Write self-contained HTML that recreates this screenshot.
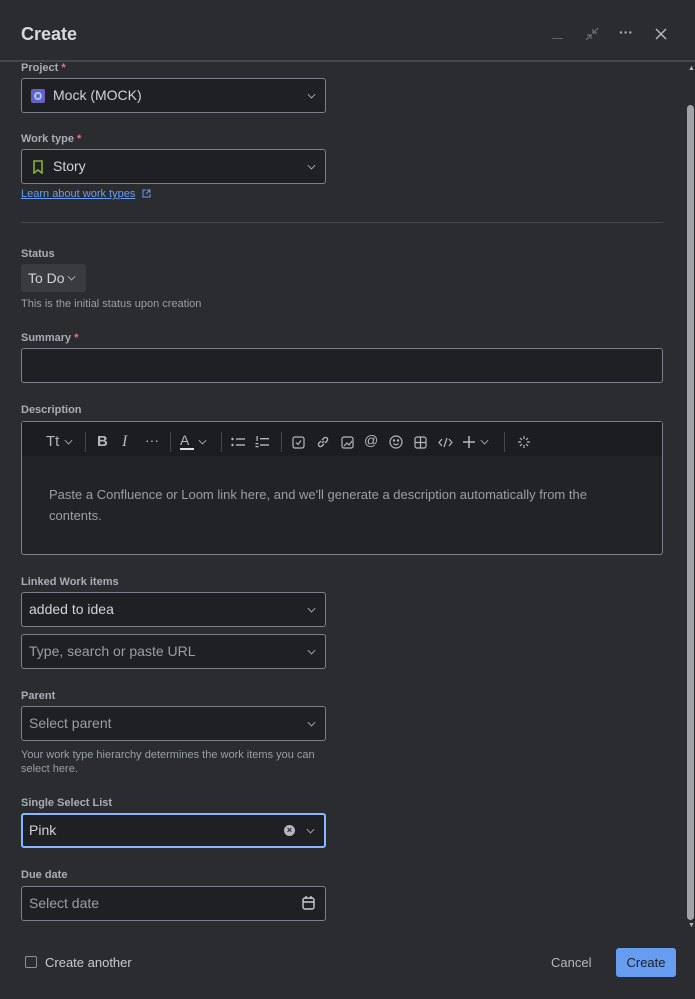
<!DOCTYPE html>
<html><head><style>
*{box-sizing:border-box;margin:0;padding:0}
body{width:695px;height:999px;background:#2b2c30;font-family:"Liberation Sans",sans-serif;color:#c7cad0;position:relative;overflow:hidden}
.a{position:absolute}
.lbl{position:absolute;left:21px;font-size:11px;font-weight:bold;color:#a9adb5}
.lbl b{color:#f87168}
.inp{position:absolute;left:21px;width:305px;height:35px;background:#1f2023;border:1px solid #7d8088;border-radius:3px;font-size:14px;color:#d0d3d9;padding-left:7px;line-height:33px}
.ph{color:#9a9ea6}
.chev{position:absolute;right:10px;top:12px;width:7px;height:7px;border-right:1.4px solid #b3b7bf;border-bottom:1.4px solid #b3b7bf;transform:rotate(45deg) scale(.8)}
.help{position:absolute;left:21px;font-size:11px;color:#9a9ea6;line-height:14px}
.tb{position:absolute;top:434px;font-size:14px;color:#b3b7bf}
.sep{position:absolute;top:432px;width:1px;height:20px;background:#45474c}
</style></head><body>
<div class="a" style="left:21px;top:24px;font-size:18px;font-weight:bold;color:#d6d9de">Create</div>
<div class="a" style="left:552px;top:38px;width:11px;height:1px;background:#5d6068"></div>
<svg class="a" style="left:585px;top:27px" width="14" height="14" viewBox="0 0 14 14" stroke="#6d7078" stroke-width="1.2" fill="none"><path d="M13 1L8 6M8 2v4h4M1 13l5-5M2 8h4v4"/></svg>
<div class="a" style="left:619px;top:24px;font-size:14px;color:#b3b7bf;font-weight:bold">···</div>
<svg class="a" style="left:655px;top:28px" width="12" height="12" stroke="#b3b7bf" stroke-width="1.5"><path d="M1 1L11 11M11 1L1 11"/></svg>
<div class="a" style="left:0;top:60px;width:695px;height:2px;background:#45474c"></div>
<div class="a" style="left:686px;top:62px;width:9px;height:937px;background:#2b2c30"></div>
<div class="a" style="left:688px;top:65px;font-size:7px;color:#b3b7bf">▲</div>
<div class="a" style="left:687px;top:105px;width:7px;height:815px;background:#a0a3a8;border-radius:4px"></div>
<div class="a" style="left:688px;top:922px;font-size:7px;color:#b3b7bf">▼</div>

<div class="lbl" style="top:62px">Project <b>*</b></div>
<div class="inp" style="top:78px;padding-left:31px">Mock (MOCK)<div class="chev"></div>
<div class="a" style="left:9px;top:10px;width:14px;height:14px;background:#6e5dc6;border-radius:2px"><div class="a" style="left:3px;top:3px;width:8px;height:8px;border:2px solid #8fd4f0;border-radius:50%"></div></div></div>

<div class="lbl" style="top:133px">Work type <b>*</b></div>
<div class="inp" style="top:149px;padding-left:31px">Story<div class="chev"></div>
<svg class="a" style="left:11px;top:10px" width="10" height="14"><path d="M1 1h8v12L5 10 1 13z" fill="none" stroke="#82b536" stroke-width="1.6"/></svg></div>
<div class="a" style="left:21px;top:188px;font-size:11px;color:#669df1;text-decoration:underline">Learn about work types</div>
<svg class="a" style="left:142px;top:189px" width="9" height="9" fill="none" stroke="#669df1" stroke-width="1"><path d="M4 1H1v7h7V5M5 1h3v3M8 1L4 5"/></svg>
<div class="a" style="left:21px;top:222px;width:642px;height:1px;background:#45474c"></div>

<div class="lbl" style="top:248px">Status</div>
<div class="a" style="left:21px;top:264px;width:65px;height:28px;background:#3a3b40;border-radius:3px;font-size:14px;color:#d0d3d9;padding:6px 0 0 7px">To Do<div class="chev" style="top:9px;right:11px"></div></div>
<div class="help" style="top:297px">This is the initial status upon creation</div>

<div class="lbl" style="top:332px">Summary <b>*</b></div>
<div class="inp" style="top:348px;width:642px"></div>

<div class="lbl" style="top:404px">Description</div>
<div class="a" style="left:21px;top:421px;width:642px;height:134px;border:1px solid #7d8088;border-radius:3px;background:#222326"></div>
<div class="a" style="left:22px;top:422px;width:640px;height:34px;background:#1c1d20"></div>
<div class="tb" style="left:46px;top:433px;font-size:15px">Tt</div><div class="chev" style="left:65px;top:437px;position:absolute"></div>
<div class="sep" style="left:85px"></div>
<div class="tb" style="left:97px;font-weight:bold;font-size:15px;top:433px">B</div>
<div class="tb" style="left:122px;font-style:italic;font-family:'Liberation Serif';font-size:16px;top:433px">I</div>
<div class="tb" style="left:145px;top:432px">···</div>
<div class="sep" style="left:170px"></div>
<div class="tb" style="left:180px;top:432px">A</div><div class="a" style="left:180px;top:448px;width:14px;height:2px;background:#e0e0e0"></div>
<div class="chev" style="left:199px;top:437px;position:absolute"></div>
<div class="sep" style="left:221px"></div>
<svg class="a" style="left:231px;top:436px" width="15" height="13" fill="#b3b7bf"><circle cx="1.5" cy="3" r="1.2"/><circle cx="1.5" cy="9" r="1.2"/><rect x="5" y="2.3" width="9" height="1.4"/><rect x="5" y="8.3" width="9" height="1.4"/></svg>
<svg class="a" style="left:255px;top:435px" width="15" height="14" fill="#b3b7bf"><rect x="1.5" y="1" width="1.3" height="5"/><rect x="0.5" y="8" width="3" height="1.3"/><rect x="0.5" y="11" width="3" height="1.3"/><rect x="5" y="3" width="9" height="1.4"/><rect x="5" y="9.3" width="9" height="1.4"/></svg>
<div class="sep" style="left:281px"></div>
<svg class="a" style="left:292px;top:436px" width="13" height="13" fill="none" stroke="#b3b7bf" stroke-width="1.2"><rect x="1" y="1" width="11" height="11" rx="2"/><path d="M4 6.5l2 2 3-4"/></svg>
<svg class="a" style="left:316px;top:435px" width="14" height="14" fill="none" stroke="#b3b7bf" stroke-width="1.3"><path d="M6 8l2-2M5 6L3 8a2 2 0 003 3l2-2M9 8l2-2a2 2 0 00-3-3L6 5"/></svg>
<svg class="a" style="left:341px;top:436px" width="13" height="13" fill="none" stroke="#b3b7bf" stroke-width="1.2"><rect x="1" y="1" width="11" height="11" rx="2"/><path d="M3 10l3-3 2 2 3-4"/></svg>
<div class="tb" style="left:364px;top:432px">@</div>
<svg class="a" style="left:389px;top:435px" width="14" height="14" fill="none" stroke="#b3b7bf" stroke-width="1.2"><circle cx="7" cy="7" r="6"/><path d="M4.5 8.5q2.5 2.5 5 0"/><circle cx="5" cy="5.5" r=".6" fill="#b3b7bf"/><circle cx="9" cy="5.5" r=".6" fill="#b3b7bf"/></svg>
<svg class="a" style="left:414px;top:436px" width="13" height="13" fill="none" stroke="#b3b7bf" stroke-width="1.2"><rect x="1" y="1" width="11" height="11" rx="2"/><path d="M6.5 1v11M1 6.5h11"/></svg>
<svg class="a" style="left:438px;top:436px" width="15" height="13" fill="none" stroke="#b3b7bf" stroke-width="1.2"><path d="M4 3L1 6.5 4 10M11 3l3 3.5-3 3.5M9 2L6 11"/></svg>
<svg class="a" style="left:462px;top:435px" width="14" height="14" stroke="#b3b7bf" stroke-width="1.5"><path d="M7 1v12M1 7h12"/></svg>
<div class="chev" style="left:481px;top:437px;position:absolute"></div>
<div class="sep" style="left:504px"></div>
<svg class="a" style="left:517px;top:435px" width="14" height="14" stroke="#b3b7bf" stroke-width="1.2"><path d="M7 1v3M7 10v3M1 7h3M10 7h3M3 3l2 2M9 9l2 2M11 3L9 5M5 9l-2 2"/></svg>
<div class="a" style="left:49px;top:484px;width:560px;font-size:13px;line-height:21px;color:#9a9ea6">Paste a Confluence or Loom link here, and we'll generate a description automatically from the contents.</div>

<div class="lbl" style="top:576px">Linked Work items</div>
<div class="inp" style="top:592px">added to idea<div class="chev"></div></div>
<div class="inp" style="top:634px"><span class="ph">Type, search or paste URL</span><div class="chev"></div></div>

<div class="lbl" style="top:690px">Parent</div>
<div class="inp" style="top:706px"><span class="ph">Select parent</span><div class="chev"></div></div>
<div class="help" style="top:748px">Your work type hierarchy determines the work items you can<br>select here.</div>

<div class="lbl" style="top:797px">Single Select List</div>
<div class="inp" style="top:813px;border:2px solid #85b8ff;padding-left:6px;line-height:31px">Pink<div class="chev" style="top:11px"></div>
<div class="a" style="left:261px;top:10px;width:11px;height:11px;border-radius:50%;background:#b3b7bf;color:#1f2023;font-size:9px;line-height:11px;text-align:center;font-weight:bold">×</div></div>

<div class="lbl" style="top:869px">Due date</div>
<div class="inp" style="top:886px"><span class="ph">Select date</span>
<svg class="a" style="left:280px;top:9px" width="13" height="14" fill="none" stroke="#c7cad0" stroke-width="1.4"><rect x="1" y="2" width="11" height="11" rx="2"/><path d="M1 6h11M4 0v3M9 0v3"/></svg></div>

<div class="a" style="left:25px;top:956px;width:12px;height:12px;border:1.4px solid #8c9099;border-radius:2px"></div>
<div class="a" style="left:45px;top:955px;font-size:13px;color:#c7cad0">Create another</div>
<div class="a" style="left:551px;top:955px;font-size:13px;color:#b3b7bf">Cancel</div>
<div class="a" style="left:616px;top:948px;width:60px;height:29px;background:#669df1;border-radius:3px;font-size:13px;color:#1f1f21;text-align:center;line-height:29px">Create</div>
</body></html>
